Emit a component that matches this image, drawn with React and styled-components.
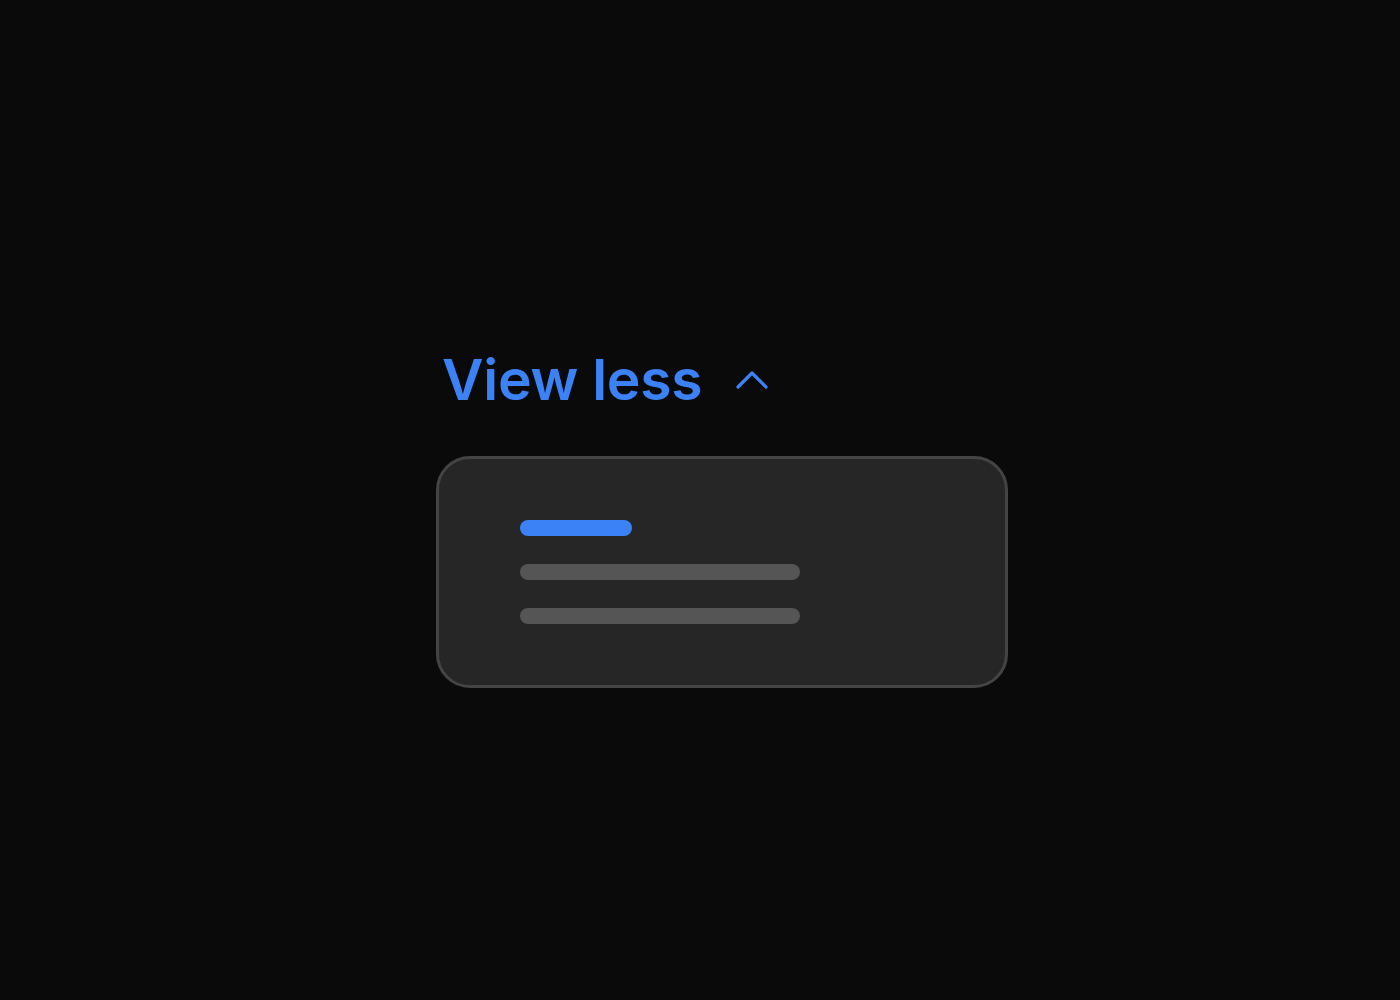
import React from "react";
import styled, { createGlobalStyle } from "styled-components";

const GlobalStyle = createGlobalStyle`
  html, body {
    margin: 0;
    padding: 0;
    background: #0a0a0a;
  }
  body {
    font-family: Inter, "Noto Sans", sans-serif;
  }
`;

const Page = styled.main`
  min-height: 1000px;
  box-sizing: border-box;
  padding: 340px 0 0 436px;
  display: flex;
  flex-direction: column;
  align-items: flex-start;
  gap: 36px;
`;

const Toggle = styled.button`
  display: flex;
  align-items: center;
  gap: 34px;
  background: none;
  border: 0;
  padding: 0 0 0 6px;
  color: #3b82f6;
  font-family: inherit;
  font-size: 57px;
  font-weight: 600;
  letter-spacing: -0.25px;
  line-height: 80px;
  cursor: pointer;
`;

const Card = styled.section`
  width: 572px;
  box-sizing: border-box;
  padding: 61px 81px;
  background: #262626;
  border: 3px solid #444444;
  border-radius: 34px;
  display: flex;
  flex-direction: column;
  gap: 28px;
`;

const Bar = styled.div`
  height: 16px;
  width: ${(p) => p.$w}px;
  border-radius: 8px;
  background: ${(p) => (p.$accent ? "#3b82f6" : "#555555")};
`;

function Chevron() {
  return (
    <svg width="32" height="20" viewBox="0 0 32 20" fill="none">
      <polyline
        points="2,17 16,3 30,17"
        stroke="#3b82f6"
        strokeWidth="3.2"
        strokeLinecap="round"
        strokeLinejoin="round"
      />
    </svg>
  );
}

export default function App() {
  return (
    <>
      <GlobalStyle />
      <Page>
        <Toggle>
          View less
          <Chevron />
        </Toggle>
        <Card>
          <Bar $accent $w={112} />
          <Bar $w={280} />
          <Bar $w={280} />
        </Card>
      </Page>
    </>
  );
}
